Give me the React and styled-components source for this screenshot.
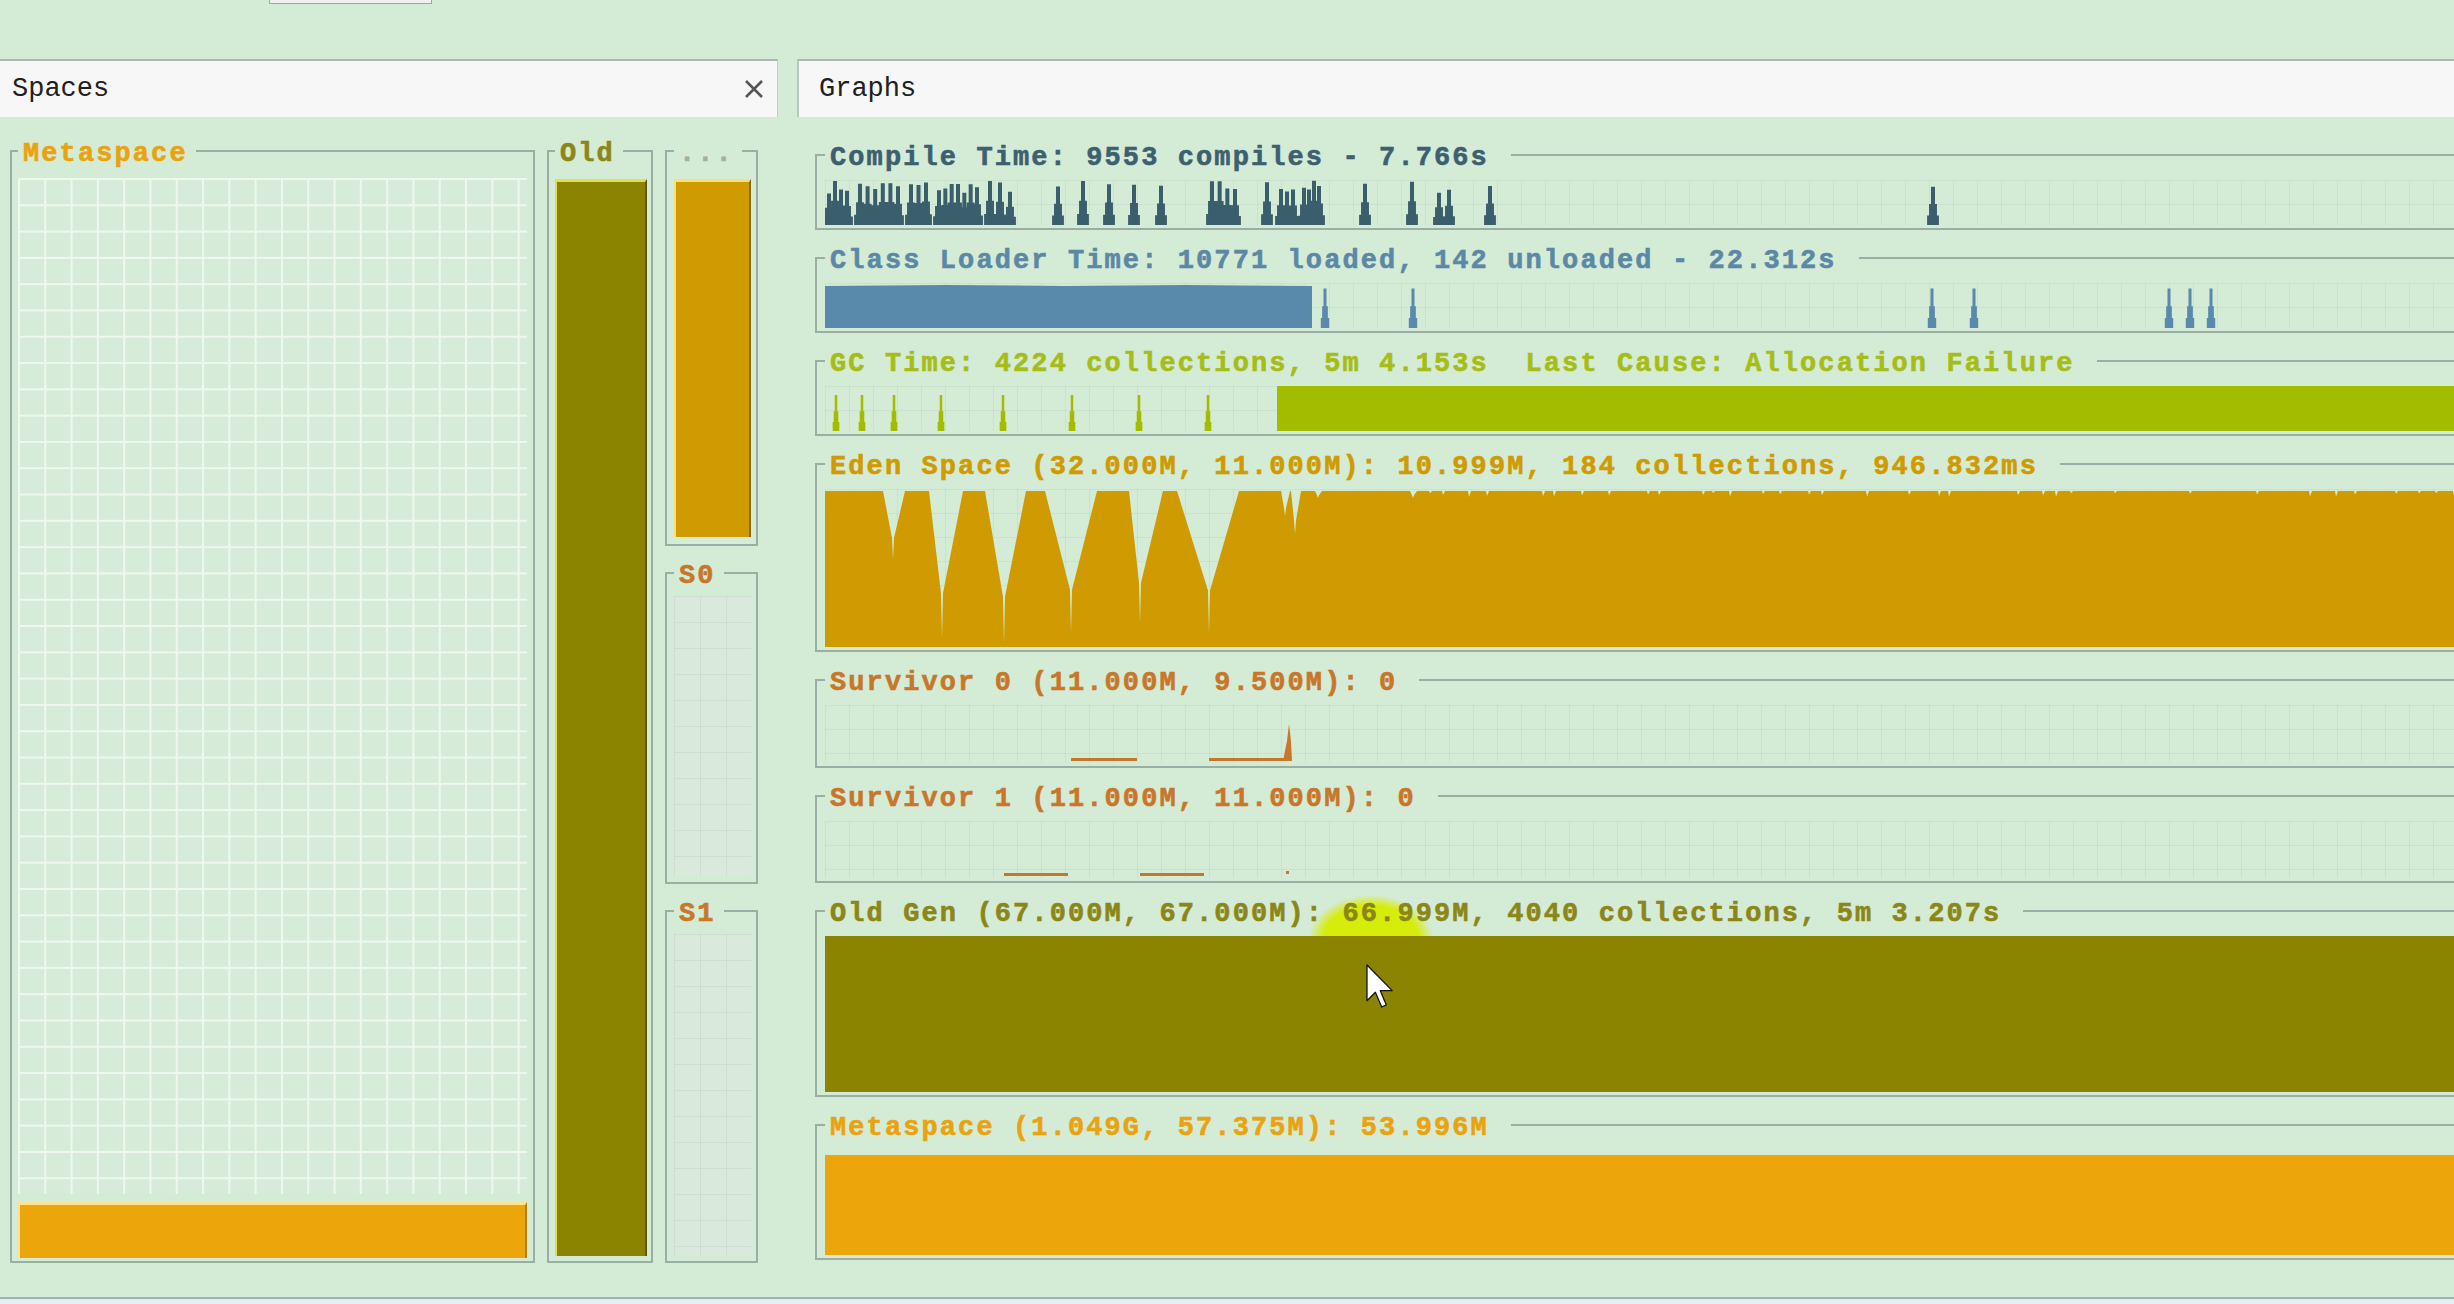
import React from 'react';
import styled, { createGlobalStyle } from 'styled-components';

const GlobalStyle = createGlobalStyle`
  html, body {
    margin: 0;
    padding: 0;
  }
  body {
    width: 2454px;
    height: 1304px;
    overflow: hidden;
    background: #d4ebd6;
    font-family: "Liberation Mono", "DejaVu Sans Mono", monospace;
  }
`;

const Screen = styled.div`
  width: 2454px;
  height: 1304px;
  overflow: hidden;
  display: flex;
  flex-direction: column;
`;

const TopStrip = styled.div`
  height: 59px;
  flex: none;
  display: flex;
  align-items: flex-start;
  padding-left: 269px;
`;

const TopButton = styled.div`
  width: 161px;
  height: 3px;
  background: #eef1ef;
  border: 1px solid #9aa8a0;
  border-top: none;
`;

const Main = styled.div`
  height: 1238px;
  flex: none;
  display: flex;
  gap: 19px;
`;

const Panel = styled.section`
  width: ${p => p.$w}px;
  flex: none;
  display: flex;
  flex-direction: column;
`;

const PanelHeader = styled.div`
  height: 56px;
  flex: none;
  box-sizing: content-box;
  border-top: 2px solid #a9b8ad;
  border-left: ${p => (p.$left ? '2px solid #b9c6bd' : 'none')};
  border-right: ${p => (p.$right ? '1px solid #c3cec6' : 'none')};
  background: #f6f7f6;
  display: flex;
  align-items: center;
  justify-content: space-between;
  padding: 0 13px 0 ${p => p.$indent}px;
  font-size: 27px;
  color: #202020;
`;

const CloseIcon = () => (
  <svg width="20" height="18" viewBox="0 0 20 18">
    <path d="M2 1 L18 17 M18 1 L2 17" stroke="#555" strokeWidth="2.6" />
  </svg>
);

const SpacesBody = styled.div`
  flex: 1;
  display: flex;
  gap: 12px;
  padding: 21px 0 34px 10px;
`;

const Column = styled.div`
  width: ${p => p.$w}px;
  flex: none;
  display: flex;
  flex-direction: column;
  gap: 14px;
`;

const Box = styled.fieldset`
  margin: 0;
  min-width: 0;
  border: 2px solid #9aaea3;
  padding: ${p => p.$pad};
  display: flex;
  flex-direction: column;
  ${p => (p.$w ? `width: ${p.$w}px; flex: none; box-sizing: border-box;` : '')}
  ${p => (p.$grow ? 'flex: 1;' : '')}
`;

const Title = styled.legend`
  position: relative;
  top: 3px;
  padding: ${p => (p.$wide ? '0 22px 0 5px' : '0 8px 0 5px')};
  font-size: 27px;
  line-height: 26px;
  font-weight: bold;
  letter-spacing: 2.1px;
  white-space: pre;
  -webkit-text-stroke: 0.6px currentColor;
  color: ${p => p.$color};
`;

const Glow = styled.span`
  position: absolute;
  left: 484px;
  top: -6px;
  width: 124px;
  height: 88px;
  z-index: -1;
  border-radius: 50%;
  background: radial-gradient(ellipse at center, rgba(214, 236, 0, 0.95) 54%, rgba(214, 236, 0, 0) 71%);
`;

const GridArea = styled.div`
  flex: 1;
  background-color: #d6ecd9;
  background-image: linear-gradient(#eef8ef 2px, transparent 2px),
    linear-gradient(90deg, #eef8ef 2px, transparent 2px);
  background-size: 26.3px 26.3px;
`;

const FaintGrid = styled.div`
  ${p => (p.$h ? `height: ${p.$h}px; flex: none;` : 'flex: 1;')}
  background-color: #d9e9dc;
  background-image: linear-gradient(rgba(200, 214, 204, 0.6) 1px, transparent 1px),
    linear-gradient(90deg, rgba(200, 214, 204, 0.6) 1px, transparent 1px);
  background-size: 26px 26px;
`;

const Bar = styled.div`
  ${p => (p.$h ? `height: ${p.$h}px; flex: none;` : 'flex: 1;')}
  margin-top: ${p => p.$gap || 0}px;
  background: ${p => p.$color};
  border-top: 3px solid ${p => p.$light};
  border-left: 2px solid ${p => p.$light};
  border-right: 2px solid ${p => p.$dark};
`;

const GraphsBody = styled.div`
  flex: 1;
  display: flex;
  flex-direction: column;
  gap: 15px;
  padding: 25px 0 0 18px;
`;

const Plot = styled.div`
  height: ${p => p.$h}px;
  background-image: linear-gradient(rgba(180, 200, 186, 0.28) 1px, transparent 1px),
    linear-gradient(90deg, rgba(180, 200, 186, 0.28) 1px, transparent 1px);
  background-size: 24px 24px;
  overflow: hidden;

  svg {
    display: block;
  }
`;

const StatusBar = styled.div`
  flex: 1;
  border-top: 2px solid #9db0b7;
  background: #e8eff0;
`;

const PLOT_W = 1680;

function rng(seed) {
  let s = seed;
  return () => {
    s = (s * 16807) % 2147483647;
    return (s - 1) / 2147483646;
  };
}

// narrow spike with a stepped base, as the jvm graphs draw them
function spike(x, h, H, k = 1, top = 3) {
  const t = H - h;
  const half = top / 2;
  return `M${x - half} ${t}h${top}v${h * 0.45}h${1.5 * k}v${h * 0.3}h${1.5 * k}V${H}h${-top - 6 * k}V${t + h * 0.75}h${1.5 * k}v${-h * 0.3}h${1.5 * k}z`;
}

function compilePath(H) {
  const r = rng(7);
  const groups = [
    [0, 26, 4], [31, 77, 6], [82, 105, 3], [110, 156, 7], [161, 189, 3],
    [229, 237, 1], [253, 263, 1], [279, 289, 1], [304, 314, 1], [332, 340, 1],
    [383, 414, 4], [437, 447, 1], [452, 472, 3], [475, 498, 4], [536, 544, 1],
    [582, 592, 1], [610, 628, 2], [661, 669, 1], [1104, 1112, 1],
  ];
  let d = '';
  groups.forEach(([a, b, n]) => {
    for (let i = 0; i < n; i++) {
      const x = n === 1 ? (a + b) / 2 : a + 4 + ((b - a - 8) * i) / (n - 1);
      const h = H * (0.7 + r() * 0.3);
      d += spike(x, h, H, 1.3, 4);
    }
  });
  return d;
}

function classPath(H) {
  let d = `M0 ${H}V3L120 2L240 3L360 2L487 3V${H}z`;
  [500, 588, 1107, 1149, 1344, 1365, 1386].forEach(x => {
    d += spike(x, H * 0.88, H, 0.9, 3);
  });
  return d;
}

function gcPath(H) {
  let d = '';
  [11, 37, 69, 116, 178, 247, 314, 383].forEach(x => {
    d += spike(x, H * 0.8, H, 0.7, 2.5);
  });
  d += `M452 0H${PLOT_W}V${H}H452z`;
  return d;
}

// eden usage: saw teeth while the young gen was being collected, flat afterwards
function edenPath(H) {
  const notches = [
    [58, 68, 80, 70], [104, 117, 138, 149], [160, 179, 201, 154], [220, 246, 272, 144],
    [304, 315, 338, 134], [352, 384, 414, 145], [456, 460, 465, 27], [466, 470, 476, 45],
    [490, 493, 497, 9], [585, 588, 592, 9],
  ];
  let d = `M0 ${H}V2`;
  notches.forEach(([a, b, c, D]) => {
    d += `L${a} 2L${b - 1} ${D * 0.7}L${b} ${D}L${b + 1} ${D * 0.7}L${c} 2`;
  });
  const r = rng(31);
  for (let x = 604; x < PLOT_W; x += 9 + Math.round(r() * 10)) {
    const dip = r() < 0.45 ? 2 + r() * 4 : 0;
    d += `L${x} 2L${x + 1} ${2 + dip}L${x + 3} 2`;
  }
  d += `L${PLOT_W} 2V${H}z`;
  return d;
}

const Cursor = ({ x, y }) => (
  <path
    transform={`translate(${x} ${y}) scale(2.1)`}
    d="M0 0V17L4 13L7 20L9.2 19L6.3 12.2H12Z"
    fill="#fff"
    stroke="#111"
    strokeWidth="0.6"
    strokeLinejoin="round"
  />
);

const Graph = ({ h, children }) => (
  <Plot $h={h}>
    <svg width={PLOT_W} height={h} viewBox={`0 0 ${PLOT_W} ${h}`}>
      {children}
    </svg>
  </Plot>
);

const GraphBox = ({ title, color, pad = '12px 0 3px 8px', children, glow }) => (
  <Box $pad={pad}>
    <Title $color={color} $wide>
      {glow && <Glow />}
      {title}
    </Title>
    {children}
  </Box>
);

const COLORS = {
  compile: '#3b5e6c',
  classes: '#5a8aab',
  gc: '#a3bc00',
  eden: '#cf9b00',
  survivor: '#c8772a',
  old: '#8a8400',
  meta: '#eca50a',
};

export default function App() {
  return (
    <>
      <GlobalStyle />
      <Screen>
        <TopStrip>
          <TopButton />
        </TopStrip>
        <Main>
          <Panel $w={778}>
            <PanelHeader $indent={12} $right>
              <span>Spaces</span>
              <CloseIcon />
            </PanelHeader>
            <SpacesBody>
              <Box $w={525} $pad="14px 6px 3px 6px">
                <Title $color="#e9a30f">Metaspace</Title>
                <GridArea />
                <Bar $h={53} $gap={8} $color={COLORS.meta} $light="#fbe594" $dark="#b77d00" />
              </Box>
              <Box $w={106} $pad="15px 4px 5px 6px">
                <Title $color="#8b8616">Old</Title>
                <Bar $color={COLORS.old} $light="#e4da5c" $dark="#5c5800" />
              </Box>
              <Column $w={93}>
                <Box $pad="15px 5px 7px 7px">
                  <Title $color="#a8ae98">...</Title>
                  <Bar $h={355} $color={COLORS.eden} $light="#f6e07c" $dark="#8c6a00" />
                </Box>
                <Box $pad="10px 5px 6px 7px">
                  <Title $color={COLORS.survivor}>S0</Title>
                  <FaintGrid $h={280} />
                </Box>
                <Box $grow $pad="10px 5px 5px 7px">
                  <Title $color={COLORS.survivor}>S1</Title>
                  <FaintGrid />
                </Box>
              </Column>
            </SpacesBody>
          </Panel>
          <Panel $w={1700}>
            <PanelHeader $indent={20} $left>
              <span>Graphs</span>
            </PanelHeader>
            <GraphsBody>
              <GraphBox title="Compile Time: 9553 compiles - 7.766s" color="#3d6070">
                <Graph h={45}>
                  <path d={compilePath(45)} fill={COLORS.compile} />
                </Graph>
              </GraphBox>
              <GraphBox title="Class Loader Time: 10771 loaded, 142 unloaded - 22.312s" color="#5b89a5">
                <Graph h={45}>
                  <path d={classPath(45)} fill={COLORS.classes} />
                </Graph>
              </GraphBox>
              <GraphBox title="GC Time: 4224 collections, 5m 4.153s  Last Cause: Allocation Failure" color="#a6bd18">
                <Graph h={45}>
                  <path d={gcPath(45)} fill={COLORS.gc} />
                </Graph>
              </GraphBox>
              <GraphBox title="Eden Space (32.000M, 11.000M): 10.999M, 184 collections, 946.832ms" color={COLORS.eden}>
                <Graph h={158}>
                  <path d={edenPath(158)} fill={COLORS.eden} />
                </Graph>
              </GraphBox>
              <GraphBox title="Survivor 0 (11.000M, 9.500M): 0" color={COLORS.survivor}>
                <Graph h={58}>
                  <g fill={COLORS.survivor}>
                    <rect x="246" y="53" width="66" height="3" />
                    <rect x="384" y="53" width="80" height="3" />
                    <path d="M458 56L462 36L464 19L466 36L467 56Z" />
                  </g>
                </Graph>
              </GraphBox>
              <GraphBox title="Survivor 1 (11.000M, 11.000M): 0" color={COLORS.survivor}>
                <Graph h={57}>
                  <g fill={COLORS.survivor}>
                    <rect x="179" y="52" width="64" height="3" />
                    <rect x="315" y="52" width="64" height="3" />
                    <rect x="461" y="50" width="3" height="3" />
                  </g>
                </Graph>
              </GraphBox>
              <GraphBox title="Old Gen (67.000M, 67.000M): 66.999M, 4040 collections, 5m 3.207s" color="#8b8616" glow>
                <Graph h={156}>
                  <rect x="0" y="0" width={PLOT_W} height="156" fill={COLORS.old} />
                  <Cursor x={542} y={29} />
                </Graph>
              </GraphBox>
              <GraphBox title="Metaspace (1.049G, 57.375M): 53.996M" color="#e9a30f" pad="17px 0 3px 8px">
                <Graph h={100}>
                  <rect x="0" y="0" width={PLOT_W} height="100" fill={COLORS.meta} />
                </Graph>
              </GraphBox>
            </GraphsBody>
          </Panel>
        </Main>
        <StatusBar />
      </Screen>
    </>
  );
}
